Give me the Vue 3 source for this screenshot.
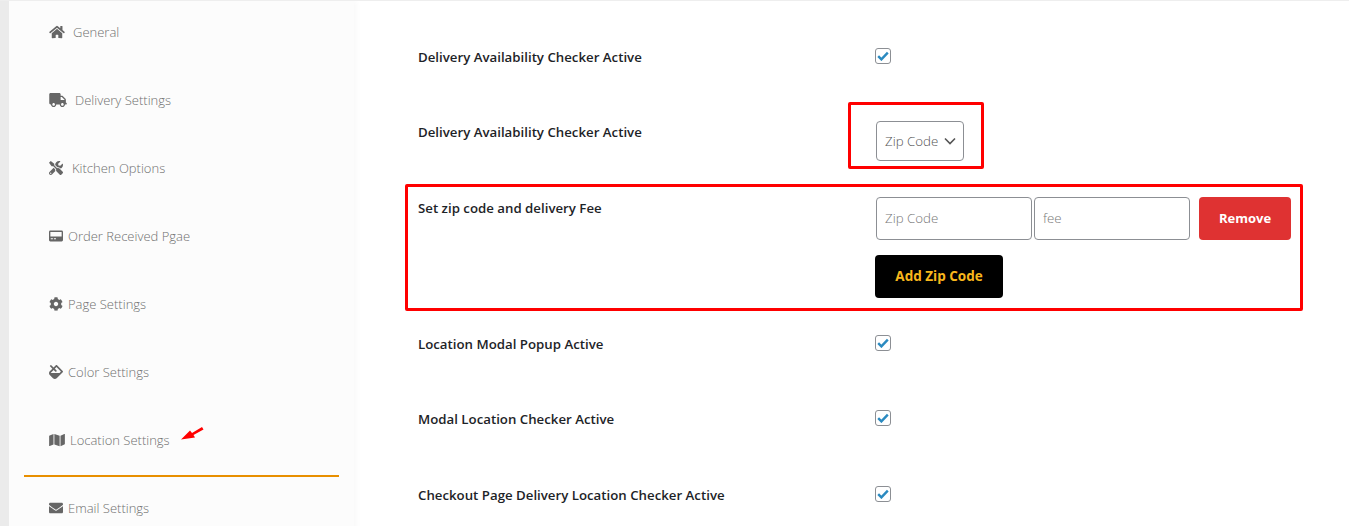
<script setup>
const menu = [
  { name: 'General', vb: '0 0 576 512', w: 16, gap: 8, d: 'M280.37 148.26L96 300.11V464a16 16 0 0 0 16 16l112.06-.29a16 16 0 0 0 15.92-16V368a16 16 0 0 1 16-16h64a16 16 0 0 1 16 16v95.64a16 16 0 0 0 16 16.05L464 480a16 16 0 0 0 16-16V300L295.67 148.26a12.19 12.19 0 0 0-15.3 0zM571.6 251.47L488 182.56V44.05a12 12 0 0 0-12-12h-56a12 12 0 0 0-12 12v72.61L318.47 43a48 48 0 0 0-61 0L4.34 251.47a12 12 0 0 0-1.6 16.9l25.5 31A12 12 0 0 0 45.15 301l235.22-193.74a12.19 12.19 0 0 1 15.3 0L530.9 301a12 12 0 0 0 16.9-1.6l25.5-31a12 12 0 0 0-1.7-16.93z' },
  { name: 'Delivery Settings', vb: '0 0 640 512', w: 18, gap: 8, d: 'M624 352h-16V243.9c0-12.7-5.1-24.9-14.1-33.9L494 110.1c-9-9-21.2-14.1-33.9-14.1H416V48c0-26.5-21.5-48-48-48H48C21.5 0 0 21.5 0 48v320c0 26.5 21.5 48 48 48h16c0 53 43 96 96 96s96-43 96-96h128c0 53 43 96 96 96s96-43 96-96h48c8.8 0 16-7.2 16-16v-32c0-8.8-7.2-16-16-16zM160 464c-26.5 0-48-21.5-48-48s21.5-48 48-48 48 21.5 48 48-21.5 48-48 48zm320 0c-26.5 0-48-21.5-48-48s21.5-48 48-48 48 21.5 48 48-21.5 48-48 48zm80-208H416V144h44.1l99.9 99.9V256z' },
  { name: 'Kitchen Options', vb: '0 0 512 512', w: 14, gap: 9, d: 'M501.1 395.7L384 278.6c-23.1-23.1-57.6-27.6-85.4-13.9L192 158.1V96L64 0 0 64l96 128h62.1l106.6 106.6c-13.6 27.8-9.2 62.3 13.9 85.4l117.1 117.1c14.6 14.6 38.2 14.6 52.7 0l52.7-52.7c14.5-14.6 14.5-38.2 0-52.7zM331.7 225c28.3 0 54.9 11 74.9 31l19.4 19.4c15.8-6.9 30.8-16.5 43.8-29.5 37.1-37.1 49.7-89.3 37.9-136.7-2.2-9-13.5-12.1-20.1-5.5l-74.4 74.4-67.9-11.3L334 98.9l74.4-74.4c6.6-6.6 3.4-17.9-5.7-20.2-47.4-11.7-99.6.9-136.6 37.9-28.5 28.5-41.9 66.1-41.2 103.6l82.1 82.1c8.1-1.9 16.5-2.9 24.7-2.9zm-103.9 82l-56.7-56.7L18.7 402.8c-25 25-25 65.5 0 90.5s65.5 25 90.5 0l123.6-123.6c-7.6-19.9-9.9-41.6-5-62.7zM64 472c-13.2 0-24-10.8-24-24 0-13.3 10.7-24 24-24s24 10.7 24 24c0 13.2-10.7 24-24 24z' },
  { name: 'Order Received Pgae', vb: '0 0 576 512', w: 14, gap: 5, d: 'M56 32h464a56 56 0 0 1 56 56v336a56 56 0 0 1-56 56H56a56 56 0 0 1-56-56V88a56 56 0 0 1 56-56zM56 96v184h464V96zM72 344v48h88v-48zm128 0v48h88v-48z' },
  { name: 'Page Settings', vb: '0 0 512 512', w: 14, gap: 5, d: 'M487.4 315.7l-42.6-24.6c4.3-23.2 4.3-47 0-70.2l42.6-24.6c4.9-2.8 7.1-8.6 5.5-14-11.1-35.6-30-67.8-54.7-94.6-3.8-4.1-10-5.1-14.8-2.3L380.8 110c-17.9-15.4-38.5-27.3-60.8-35.1V25.8c0-5.6-3.9-10.5-9.4-11.7-36.7-8.2-74.3-7.8-109.2 0-5.5 1.2-9.4 6.1-9.4 11.7V75c-22.2 7.9-42.8 19.8-60.8 35.1L88.7 85.5c-4.9-2.8-11-1.9-14.8 2.3-24.7 26.7-43.6 58.9-54.7 94.6-1.7 5.4.6 11.2 5.5 14L67.3 221c-4.3 23.2-4.3 47 0 70.2l-42.6 24.6c-4.9 2.8-7.1 8.6-5.5 14 11.1 35.6 30 67.8 54.7 94.6 3.8 4.1 10 5.1 14.8 2.3l42.6-24.6c17.9 15.4 38.5 27.3 60.8 35.1v49.2c0 5.6 3.9 10.5 9.4 11.7 36.7 8.2 74.3 7.8 109.2 0 5.5-1.2 9.4-6.1 9.4-11.7v-49.2c22.2-7.9 42.8-19.8 60.8-35.1l42.6 24.6c4.9 2.8 11 1.9 14.8-2.3 24.7-26.7 43.6-58.9 54.7-94.6 1.5-5.5-.7-11.3-5.6-14.1zM256 336c-44.1 0-80-35.9-80-80s35.9-80 80-80 80 35.9 80 80-35.9 80-80 80z' },
  { name: 'Color Settings', vb: '0 0 512 512', w: 14, gap: 5, d: 'M502.63 217.06L294.94 9.37C288.69 3.12 280.5 0 272.31 0s-16.38 3.12-22.62 9.37l-81.58 81.58L81.93 4.77c-6.24-6.25-16.38-6.25-22.62 0L36.69 27.38c-6.24 6.25-6.24 16.38 0 22.63l86.19 86.18-94.76 94.76c-37.49 37.49-37.49 98.26 0 135.75l117.19 117.19c18.75 18.74 43.31 28.12 67.87 28.12 24.57 0 49.13-9.37 67.88-28.12l221.57-221.57c12.49-12.5 12.49-32.76 0-45.25zm-116.22 70.97H65.93c1.36-3.84 3.57-7.98 7.43-11.83l13.15-13.15 81.61-81.61 58.6 58.6c12.49 12.49 32.75 12.49 45.24 0 12.49-12.49 12.49-32.75 0-45.24l-58.6-58.6 58.95-58.95 162.44 162.44-48.34 48.34z' },
  { name: 'Location Settings', vb: '0 0 576 512', w: 16, gap: 5, d: 'M0 117.66v346.32c0 11.32 11.43 19.06 21.94 14.86L160 416V32L20.12 87.95A32.006 32.006 0 0 0 0 117.66zM192 416l192 64V96L192 32v384zM554.06 33.16L416 96v384l139.88-55.95A31.996 31.996 0 0 0 576 394.34V48.02c0-11.32-11.43-19.06-21.94-14.86z', active: true },
  { name: 'Email Settings', vb: '0 0 512 512', w: 14, gap: 5, d: 'M502.3 190.8c3.9-3.1 9.7-.2 9.7 4.7V400c0 26.5-21.5 48-48 48H48c-26.5 0-48-21.5-48-48V195.6c0-5 5.7-7.8 9.7-4.7 22.4 17.4 52.1 39.5 154.1 113.6 21.1 15.4 56.7 47.8 92.2 47.6 35.7.3 72-32.8 92.3-47.6 102-74.1 131.6-96.3 154-113.7zM256 320c23.2.4 56.6-29.2 73.4-41.4 132.7-96.3 142.8-104.7 173.4-128.7 5.8-4.5 9.2-11.5 9.2-18.9v-19c0-26.5-21.5-48-48-48H48C21.5 64 0 85.5 0 112v19c0 7.4 3.4 14.3 9.2 18.9 30.6 23.9 40.7 32.4 173.4 128.7 16.8 12.2 50.2 41.8 73.4 41.4z' }
]

const lowerRows = [
  'Location Modal Popup Active',
  'Modal Location Checker Active',
  'Checkout Page Delivery Location Checker Active'
]
</script>

<template>
  <div class="page">
    <aside class="sidebar">
      <div v-for="item in menu" :key="item.name" :class="['menu-item', { active: item.active }]">
        <svg class="menu-icon" :viewBox="item.vb" :width="item.w" height="14" :style="{ marginRight: item.gap + 'px' }">
          <path :d="item.d" fill-rule="evenodd" />
        </svg>
        <span>{{ item.name }}</span>
        <svg v-if="item.active" class="arrow" width="26" height="15" viewBox="0 0 26 15">
          <path d="M2 13.5L11 4.5 13 7 23 1 24.5 3.5 14.5 9 16 11.5z" fill="#f00" />
        </svg>
      </div>
    </aside>

    <main class="content">
      <div class="row first">
        <label class="label">Delivery Availability Checker Active</label>
        <span class="check">
          <svg width="12" height="10" viewBox="0 0 12 10"><path d="M1.2 5.2L4.4 8.4 10.8 1.6" fill="none" stroke="#2b8ac0" stroke-width="2.4" /></svg>
        </span>
      </div>

      <div class="row select-row">
        <label class="label">Delivery Availability Checker Active</label>
        <div class="mark-select">
          <div class="select">
            <span>Zip Code</span>
            <svg width="12" height="8" viewBox="0 0 12 8"><path d="M1 1.5L6 6.5 11 1.5" fill="none" stroke="#555" stroke-width="1.6" /></svg>
          </div>
        </div>
      </div>

      <div class="row zip-row">
        <label class="label">Set zip code and delivery Fee</label>
        <div class="zip-fields">
          <div class="zip-inputs">
            <input class="field" placeholder="Zip Code" />
            <input class="field" placeholder="fee" />
            <button class="btn remove">Remove</button>
          </div>
          <button class="btn add">Add Zip Code</button>
        </div>
      </div>

      <div v-for="text in lowerRows" :key="text" class="row">
        <label class="label">{{ text }}</label>
        <span class="check">
          <svg width="12" height="10" viewBox="0 0 12 10"><path d="M1.2 5.2L4.4 8.4 10.8 1.6" fill="none" stroke="#2b8ac0" stroke-width="2.4" /></svg>
        </span>
      </div>
    </main>
  </div>
</template>

<style>
html, body {
  margin: 0;
  background: #fff;
  overflow: hidden;
}
</style>

<style scoped>
.page {
  display: flex;
  height: 526px;
  overflow: hidden;
  background: #fff;
  font-family: "Open Sans", "Liberation Sans", sans-serif;
  border-top: 1px solid #eee;
  box-sizing: border-box;
}

.sidebar {
  width: 345px;
  height: 600px;
  margin-left: 9px;
  background: #fcfcfc;
  box-shadow: -9px 0 0 #ebebeb, 2px 0 6px rgba(0, 0, 0, 0.03);
  padding: 0 15px;
  box-sizing: border-box;
  flex-shrink: 0;
}

.menu-item {
  position: relative;
  display: flex;
  align-items: center;
  height: 68px;
  padding-left: 25px;
  box-sizing: border-box;
  font-size: 13px;
  font-weight: 300;
  color: #6f6f6f;
  margin-top: -3px;
  margin-bottom: 3px;
}

.menu-item.active::after {
  content: "";
  position: absolute;
  left: 0;
  right: 0;
  bottom: -3px;
  height: 2px;
  background: #e88f00;
}

.menu-icon {
  fill: #666;
  flex-shrink: 0;
}

.arrow {
  position: absolute;
  left: 155px;
  top: 20px;
}

.content {
  flex: 1;
  padding: 18px 46px 0 51px;
}

.row {
  display: grid;
  grid-template-columns: 457px 1fr;
  align-items: center;
  height: 75.5px;
  padding-left: 13px;
  box-sizing: border-box;
}

.label {
  font-size: 13.25px;
  font-weight: 600;
  color: #1d2327;
}

.check {
  display: flex;
  align-items: center;
  justify-content: center;
  width: 16px;
  height: 16px;
  border: 1px solid #8c8f94;
  border-radius: 3px;
  box-sizing: border-box;
  margin-top: -2px;
}

.select-row {
  height: 65px;
  margin-top: 7px;
  align-items: start;
}

.select-row .label {
  margin-top: 21px;
}

.mark-select {
  width: 136px;
  height: 67px;
  margin-left: -27px;
  padding: 16px 0 0 25px;
  border: 3px solid #f00;
  border-radius: 2px;
  box-sizing: border-box;
}

.select {
  display: flex;
  align-items: center;
  justify-content: space-between;
  width: 88px;
  height: 40px;
  padding: 0 7px 0 8px;
  border: 1px solid #8c8f94;
  border-radius: 4px;
  box-sizing: border-box;
  font-size: 13.3px;
  font-weight: 300;
  color: #555;
}

.zip-row {
  height: 127px;
  margin-top: 17px;
  margin-bottom: -4.5px;
  padding: 10px 0 0 10px;
  border: 3px solid #f00;
  border-radius: 2px;
  align-items: start;
  grid-template-columns: 458px 1fr;
}

.zip-row .label {
  margin-top: 2px;
}

.zip-inputs {
  display: flex;
  gap: 2px;
}

.field {
  width: 156px;
  height: 43px;
  padding: 0 8px;
  border: 1px solid #8c8f94;
  border-radius: 4px;
  box-sizing: border-box;
  font-family: inherit;
  font-size: 13.3px;
  font-weight: 300;
  color: #555;
  background: #fff;
}

.field::placeholder {
  color: #777;
  opacity: 1;
}

.btn {
  height: 43px;
  border: none;
  border-radius: 4px;
  font-family: inherit;
  font-size: 13px;
  font-weight: 700;
}

.remove {
  width: 92px;
  margin-left: 7px;
  background: #df3232;
  color: #fff;
}

.add {
  display: block;
  width: 128px;
  margin-top: 15px;
  margin-left: -1px;
  background: #000;
  color: #f8b71c;
  font-size: 13.5px;
}
</style>
